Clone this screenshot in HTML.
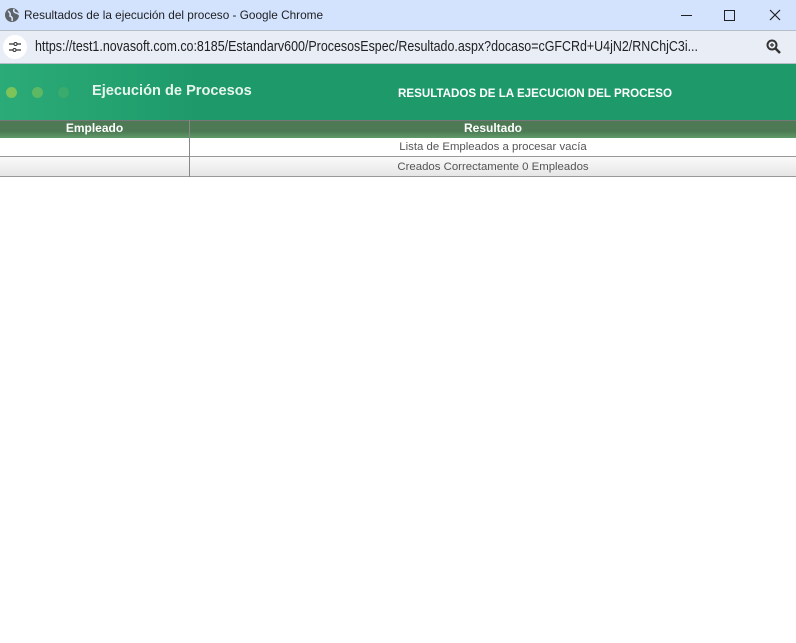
<!DOCTYPE html>
<html><head><style>
body{margin:0;width:796px;height:643px;overflow:hidden;background:#fff;font-family:"Liberation Sans",sans-serif;position:relative}
.a{position:absolute}
</style></head><body>
<div class="a" style="left:0;top:0;width:796px;height:30px;background:#d3e3fd"></div>
<svg class="a" style="left:4px;top:7px" width="16" height="16" viewBox="0 0 16 16"><circle cx="8" cy="8" r="7" fill="#5f6368"/><path d="M4 4 Q7 6 6 9 Q9 10 8 14 M10 2 Q9 5 12 6 Q14 6 15 8" stroke="#d3e3fd" stroke-width="1.6" fill="none"/></svg>
<div class="a" style="left:24px;top:8px;font-size:11.8px;color:#202124">Resultados de la ejecución del proceso - Google Chrome</div>
<div class="a" style="left:681px;top:15px;width:11px;height:1px;background:#202124"></div>
<div class="a" style="left:724px;top:10px;width:9px;height:9px;border:1px solid #202124"></div>
<svg class="a" style="left:769px;top:9px" width="12" height="12"><path d="M1 1L11 11M11 1L1 11" stroke="#202124" stroke-width="1.2"/></svg>
<div class="a" style="left:0;top:30px;width:796px;height:1px;background:#b8bec8"></div>
<div class="a" style="left:0;top:31px;width:796px;height:32px;background:#e9eef6"></div>
<div class="a" style="left:3px;top:35px;width:24px;height:24px;border-radius:12px;background:#fff"></div>
<svg class="a" style="left:9px;top:41px" width="12" height="12"><path d="M0 3H5M8 3H12M0 9H4M7 9H12" stroke="#333" stroke-width="1.3"/><circle cx="6.5" cy="3" r="1.5" fill="none" stroke="#333"/><circle cx="5.5" cy="9" r="1.5" fill="none" stroke="#333"/></svg>
<div class="a" style="left:35px;top:38px;font-size:15px;color:#202124;white-space:nowrap;transform:scaleX(0.83);transform-origin:0 0">https://test1.novasoft.com.co:8185/Estandarv600/ProcesosEspec/Resultado.aspx?docaso=cGFCRd+U4jN2/RNChjC3i...</div>
<svg class="a" style="left:766px;top:39px" width="16" height="16"><circle cx="6" cy="6" r="4.5" fill="none" stroke="#333" stroke-width="2"/><path d="M9.5 9.5L14 14" stroke="#333" stroke-width="2.5"/><path d="M4 6H8M6 4V8" stroke="#333" stroke-width="1.2"/></svg>
<div class="a" style="left:0;top:63px;width:796px;height:1px;background:#b8bec8"></div>
<div class="a" style="left:0;top:64px;width:796px;height:56px;background:linear-gradient(90deg,#2bab77 0,#1e9a6a 200px,#1e9a6a)"></div>
<div class="a" style="left:6px;top:87px;width:11px;height:11px;border-radius:6px;background:#7cc35a"></div>
<div class="a" style="left:32px;top:87px;width:11px;height:11px;border-radius:6px;background:#5db864"></div>
<div class="a" style="left:58px;top:87px;width:11px;height:11px;border-radius:6px;background:#3aab6c"></div>
<div class="a" style="left:92px;top:83px;font-size:14.6px;font-weight:bold;color:#e8f5ee">Ejecución de Procesos</div>
<div class="a" style="left:398px;top:87px;font-size:11.6px;font-weight:bold;color:#fff">RESULTADOS DE LA EJECUCION DEL PROCESO</div>
<div class="a" style="left:0;top:120px;width:796px;height:17px;background:linear-gradient(#4d7a54,#4d7a54 60%,#5f9a68);border-top:1px solid #777"></div>
<div class="a" style="left:0;top:121px;width:189px;text-align:center;font-size:12px;font-weight:bold;color:#fff">Empleado</div>
<div class="a" style="left:190px;top:121px;width:606px;text-align:center;font-size:12px;font-weight:bold;color:#fff">Resultado</div>
<div class="a" style="left:0;top:157px;width:796px;height:19px;background:linear-gradient(#fafafa,#e6e6e6)"></div>
<div class="a" style="left:0;top:156px;width:796px;height:1px;background:#999"></div>
<div class="a" style="left:0;top:176px;width:796px;height:1px;background:#999"></div>
<div class="a" style="left:189px;top:120px;width:1px;height:57px;background:#888"></div>
<div class="a" style="left:190px;top:141px;width:606px;text-align:center;font-size:11.4px;color:#555">Lista de Empleados a procesar vacía</div>
<div class="a" style="left:190px;top:161px;width:606px;text-align:center;font-size:11.4px;color:#555">Creados Correctamente 0 Empleados</div>
</body></html>
